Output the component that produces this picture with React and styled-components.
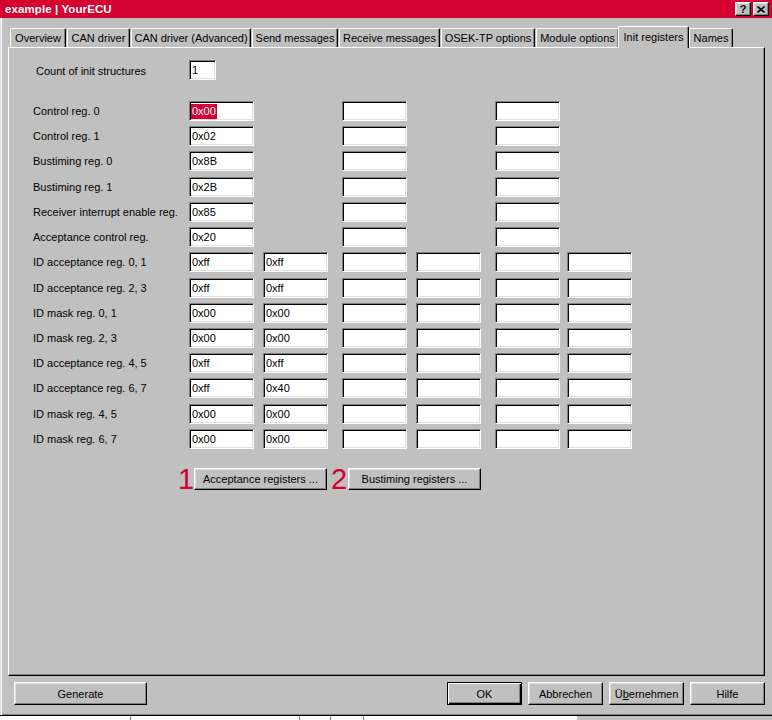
import React from "react";
import styled, { createGlobalStyle, css } from "styled-components";

const GlobalStyle = createGlobalStyle`
  html, body {
    margin: 0;
    padding: 0;
    background: #c0c0c0;
  }
  body {
    font-family: "Liberation Sans", Arial, sans-serif;
    font-size: 11px;
    color: #000;
  }
`;

const RED = "#d4002f";

const raised = css`
  border: 1px solid;
  border-color: #fff #000 #000 #fff;
  box-shadow: inset -1px -1px #808080, inset 1px 1px #dfdfdf;
`;

const Page = styled.div`
  width: 772px;
  height: 720px;
  display: flex;
  flex-direction: column;
  background: #c0c0c0;
  overflow: hidden;
`;

const Frame = styled.div`
  height: 716px;
  box-sizing: border-box;
  display: flex;
  flex-direction: column;
  border-bottom: 1px solid #000;
  box-shadow: inset 0 -1px #808080;
`;

const TitleBar = styled.div`
  height: 18px;
  flex: none;
  background: ${RED};
  display: flex;
  align-items: center;
  padding: 0 3px 0 5px;
`;

const Title = styled.div`
  flex: 1;
  color: #fff;
  font-weight: bold;
  font-size: 11.5px;
  letter-spacing: 0.1px;
`;

const CaptionButton = styled.div`
  width: 16px;
  height: 14px;
  box-sizing: border-box;
  background: #c0c0c0;
  ${raised};
  display: flex;
  align-items: center;
  justify-content: center;
  font-weight: bold;
  font-size: 11px;
  line-height: 1;
  margin-left: ${(p) => p.$gap || 0}px;
`;

const Body = styled.div`
  flex: 1;
  display: flex;
  flex-direction: column;
  padding: 9px 7px 0 8px;
  box-shadow: inset 1px 0 #dfdfdf, inset 2px 0 #fff;
`;

const TabStrip = styled.div`
  height: 21px;
  display: flex;
  align-items: flex-end;
  padding-left: 2px;
  position: relative;
  z-index: 1;
  margin-bottom: -1px;
`;

const Tab = styled.div`
  width: ${(p) => p.$w}px;
  height: 19px;
  margin-right: 1px;
  margin-bottom: 1px;
  box-sizing: border-box;
  border-top: 1px solid #fff;
  border-left: 1px solid #fff;
  border-right: 1px solid #000;
  border-radius: 2px 2px 0 0;
  box-shadow: inset -1px 0 #808080;
  background: #c0c0c0;
  display: flex;
  align-items: center;
  justify-content: center;
  white-space: nowrap;

  ${(p) =>
    p.$active &&
    css`
      height: 22px;
      margin: 0 0 0 -2px;
      padding-bottom: 2px;
      position: relative;
      z-index: 2;
    `}
`;

const Panel = styled.div`
  height: 629px;
  box-sizing: border-box;
  border: 1px solid;
  border-color: #fff #000 #000 #fff;
  box-shadow: inset -1px -1px #808080;
  padding: 12px 0 0 24px;
  display: flex;
  flex-direction: column;
`;

const CountRow = styled.div`
  display: flex;
  align-items: center;
  height: 20px;
`;

const CountLabel = styled.div`
  width: 153px;
  margin-left: 3px;
  padding-top: 2px;
`;

const Field = styled.div`
  width: ${(p) => p.$w || 65}px;
  height: 20px;
  box-sizing: border-box;
  background: #fff;
  border: 1px solid;
  border-color: #808080 #fff #fff #808080;
  box-shadow: inset 1px 1px #000, inset -1px -1px #dfdfdf;
  padding-left: 2px;
  display: flex;
  align-items: center;
  white-space: nowrap;
`;

const Selected = styled.span`
  background: ${RED};
  color: #fff;
  margin-left: -1px;
  padding: 1px 1px 2px 1px;
`;

const RegGrid = styled.div`
  margin-top: 21px;
  display: grid;
  grid-template-columns: 156px 74px 79px 74px 79px 72px 65px;
  grid-auto-rows: 20px;
  row-gap: 5.23px;
`;

const RegLabel = styled.div`
  display: flex;
  align-items: center;
  white-space: nowrap;
`;

const ActionRow = styled.div`
  margin-top: 19px;
  display: flex;
  align-items: center;
`;

const Num = styled.span`
  width: 16px;
  margin-left: ${(p) => p.$ml}px;
  color: ${RED};
  font-size: 29px;
  line-height: 22px;
`;

const Button = styled.div`
  width: ${(p) => p.$w}px;
  height: ${(p) => p.$h || 23}px;
  box-sizing: border-box;
  background: #c0c0c0;
  ${raised};
  display: flex;
  align-items: center;
  justify-content: center;
  white-space: nowrap;
  margin-left: ${(p) => p.$ml || 0}px;

  ${(p) =>
    p.$default &&
    css`
      border: 1px solid #000;
      box-shadow: inset 1px 1px #fff, inset -1px -1px #000,
        inset -2px -2px #808080;
    `}
`;

const Accel = styled.span`
  text-decoration: underline;
`;

const ButtonBar = styled.div`
  margin-top: 6px;
  display: flex;
  align-items: center;
  gap: 6px;
  padding-left: 6px;
`;

const Spacer = styled.div`
  flex: 1;
`;

const TaskStrip = styled.div`
  flex: 1;
  display: flex;
`;

const Segment = styled.div`
  width: ${(p) => p.$w}px;
  background: ${(p) => p.$bg};
  border-left: ${(p) => (p.$tick ? "1px solid #808080" : "none")};
`;

const tabs = [
  { label: "Overview", w: 56 },
  { label: "CAN driver", w: 63 },
  { label: "CAN driver (Advanced)", w: 120 },
  { label: "Send messages", w: 86 },
  { label: "Receive messages", w: 101 },
  { label: "OSEK-TP options", w: 94 },
  { label: "Module options", w: 83 },
  { label: "Init registers", w: 71, active: true },
  { label: "Names", w: 44 },
];

// undefined = no field in that column, "" = empty field
const rows = [
  ["Control reg. 0", ["0x00", undefined, "", undefined, "", undefined], true],
  ["Control reg. 1", ["0x02", undefined, "", undefined, "", undefined]],
  ["Bustiming reg. 0", ["0x8B", undefined, "", undefined, "", undefined]],
  ["Bustiming reg. 1", ["0x2B", undefined, "", undefined, "", undefined]],
  ["Receiver interrupt enable reg.", ["0x85", undefined, "", undefined, "", undefined]],
  ["Acceptance control reg.", ["0x20", undefined, "", undefined, "", undefined]],
  ["ID acceptance reg. 0, 1", ["0xff", "0xff", "", "", "", ""]],
  ["ID acceptance reg. 2, 3", ["0xff", "0xff", "", "", "", ""]],
  ["ID mask reg. 0, 1", ["0x00", "0x00", "", "", "", ""]],
  ["ID mask reg. 2, 3", ["0x00", "0x00", "", "", "", ""]],
  ["ID acceptance reg. 4, 5", ["0xff", "0xff", "", "", "", ""]],
  ["ID acceptance reg. 6, 7", ["0xff", "0x40", "", "", "", ""]],
  ["ID mask reg. 4, 5", ["0x00", "0x00", "", "", "", ""]],
  ["ID mask reg. 6, 7", ["0x00", "0x00", "", "", "", ""]],
];

function CloseIcon() {
  return (
    <svg width="8" height="7" viewBox="0 0 8 7">
      <path d="M0.5 0.5 L7.5 6.5 M7.5 0.5 L0.5 6.5" stroke="#000" strokeWidth="1.6" />
    </svg>
  );
}

export default function App() {
  return (
    <>
      <GlobalStyle />
      <Page>
        <Frame>
          <TitleBar>
            <Title>example | YourECU</Title>
            <CaptionButton>?</CaptionButton>
            <CaptionButton $gap={2}>
              <CloseIcon />
            </CaptionButton>
          </TitleBar>
          <Body>
            <TabStrip>
              {tabs.map((t) => (
                <Tab key={t.label} $w={t.w} $active={t.active}>
                  {t.label}
                </Tab>
              ))}
            </TabStrip>
            <Panel>
              <CountRow>
                <CountLabel>Count of init structures</CountLabel>
                <Field $w={27}>1</Field>
              </CountRow>
              <RegGrid>
                {rows.map(([label, values, sel]) => (
                  <React.Fragment key={label}>
                    <RegLabel>{label}</RegLabel>
                    {values.map((v, i) =>
                      v === undefined ? (
                        <div key={i} />
                      ) : (
                        <Field key={i}>
                          {sel && i === 0 ? <Selected>{v}</Selected> : v}
                        </Field>
                      )
                    )}
                  </React.Fragment>
                ))}
              </RegGrid>
              <ActionRow>
                <Num $ml={145}>1</Num>
                <Button $w={133} $h={22}>Acceptance registers ...</Button>
                <Num $ml={4}>2</Num>
                <Button $w={133} $h={22} $ml={1}>
                  Bustiming registers ...
                </Button>
              </ActionRow>
            </Panel>
            <ButtonBar>
              <Button $w={133}>Generate</Button>
              <Spacer />
              <Button $w={75} $default>
                OK
              </Button>
              <Button $w={75}>Abbrechen</Button>
              <Button $w={75}>
                Ü<Accel>b</Accel>ernehmen
              </Button>
              <Button $w={75}>Hilfe</Button>
            </ButtonBar>
          </Body>
        </Frame>
        <TaskStrip>
          <Segment $w={131} $bg="#fff" />
          <Segment $w={169} $bg="#fff" $tick />
          <Segment $w={30} $bg="#fff" $tick />
          <Segment $w={32} $bg="#fff" $tick />
          <Segment $w={214} $bg="#fff" $tick />
          <Segment $w={196} $bg="#c0c0c0" />
        </TaskStrip>
      </Page>
    </>
  );
}
